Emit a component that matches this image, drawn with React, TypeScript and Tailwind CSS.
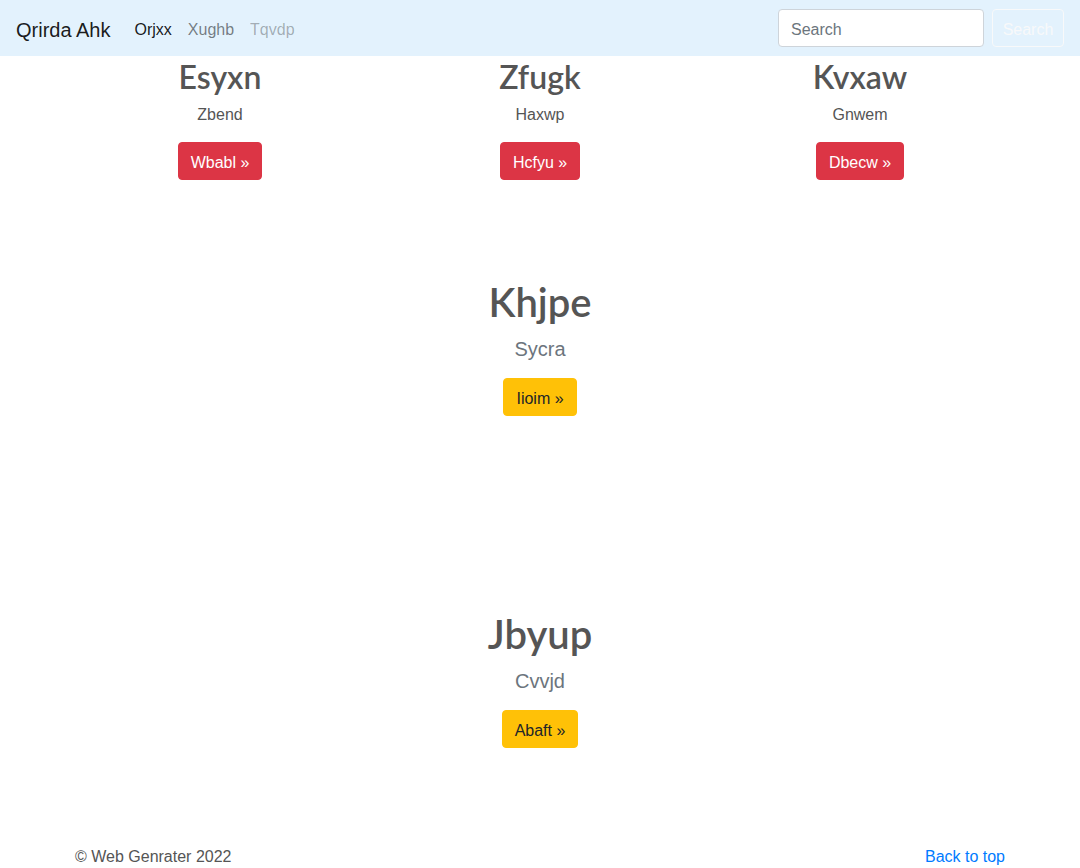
import React from "react";

const cols = [
  { title: "Esyxn", text: "Zbend", btn: "Wbabl" },
  { title: "Zfugk", text: "Haxwp", btn: "Hcfyu" },
  { title: "Kvxaw", text: "Gnwem", btn: "Dbecw" },
];

const features = [
  { title: "Khjpe", text: "Sycra", btn: "Iioim", top: "mt-[82px]" },
  { title: "Jbyup", text: "Cvvjd", btn: "Abaft", top: "mt-[194px]" },
];

export default function App() {
  return (
    <div className="min-h-[868px] bg-white text-[#212529] font-['Liberation_Sans',Arial,sans-serif] text-base leading-6">
      {/* Navbar */}
      <nav className="flex h-14 items-center bg-[#e3f2fd] px-4">
        <a href="#" className="mr-4 pt-[4px] text-xl leading-[30px] text-black/90">
          Qrirda Ahk
        </a>
        <ul className="flex">
          <li>
            <a href="#" className="block px-2 pt-[10px] pb-[6px] text-black/90">Orjxx</a>
          </li>
          <li>
            <a href="#" className="block px-2 pt-[10px] pb-[6px] text-black/50">Xughb</a>
          </li>
          <li>
            <span className="block px-2 pt-[10px] pb-[6px] text-black/30">Tqvdp</span>
          </li>
        </ul>
        <form className="ml-auto flex items-center">
          <input
            type="search"
            placeholder="Search"
            className="mr-2 h-[38px] w-[206px] rounded border border-[#ced4da] bg-white px-3 pt-[3px] text-base text-[#495057] placeholder:text-[#6c757d] outline-none"
          />
          <button
            type="button"
            className="h-[38px] w-[72px] rounded border border-[#f8f9fa] pt-[3px] text-base text-[#f8f9fa]"
          >
            Search
          </button>
        </form>
      </nav>

      {/* Columns */}
      <div className="mx-auto w-[960px] px-[15px]">
        <div className="-mx-[15px] grid grid-cols-3">
          {cols.map((c) => (
            <div key={c.title} className="px-[15px] text-center">
              <h2 className="mb-2 pt-[2px] h-[38.4px] font-['Lato',sans-serif] text-[32px] font-semibold leading-[38.4px] text-[#555]">
                {c.title}
              </h2>
              <p className="mb-4 pt-[1px] h-6 text-[#555]">{c.text}</p>
              <p className="mb-4">
                <a
                  href="#"
                  className="inline-block rounded border border-[#dc3545] bg-[#dc3545] px-3 pt-[8px] pb-[4px] leading-6 text-white"
                >
                  {c.btn} »
                </a>
              </p>
            </div>
          ))}
        </div>

        {features.map((f) => (
          <div key={f.title} className={`${f.top} text-center`}>
            <h1 className="mb-2 h-12 font-['Lato',sans-serif] text-[40px] font-semibold leading-[48px] text-[#555]">
              {f.title}
            </h1>
            <p className="mb-[14px] h-[30px] text-xl font-light leading-[30px] text-[#6c757d]">
              {f.text}
            </p>
            <p className="mb-4">
              <a
                href="#"
                className="inline-block rounded border border-[#ffc107] bg-[#ffc107] px-3 pt-[8px] pb-[4px] leading-6 text-[#212529]"
              >
                {f.btn} »
              </a>
            </p>
          </div>
        ))}

        {/* Footer */}
        <footer className="mt-[97px] flex justify-between text-[#555]">
          <p>© Web Genrater 2022</p>
          <a href="#" className="text-[#007bff]">
            Back to top
          </a>
        </footer>
      </div>
    </div>
  );
}
